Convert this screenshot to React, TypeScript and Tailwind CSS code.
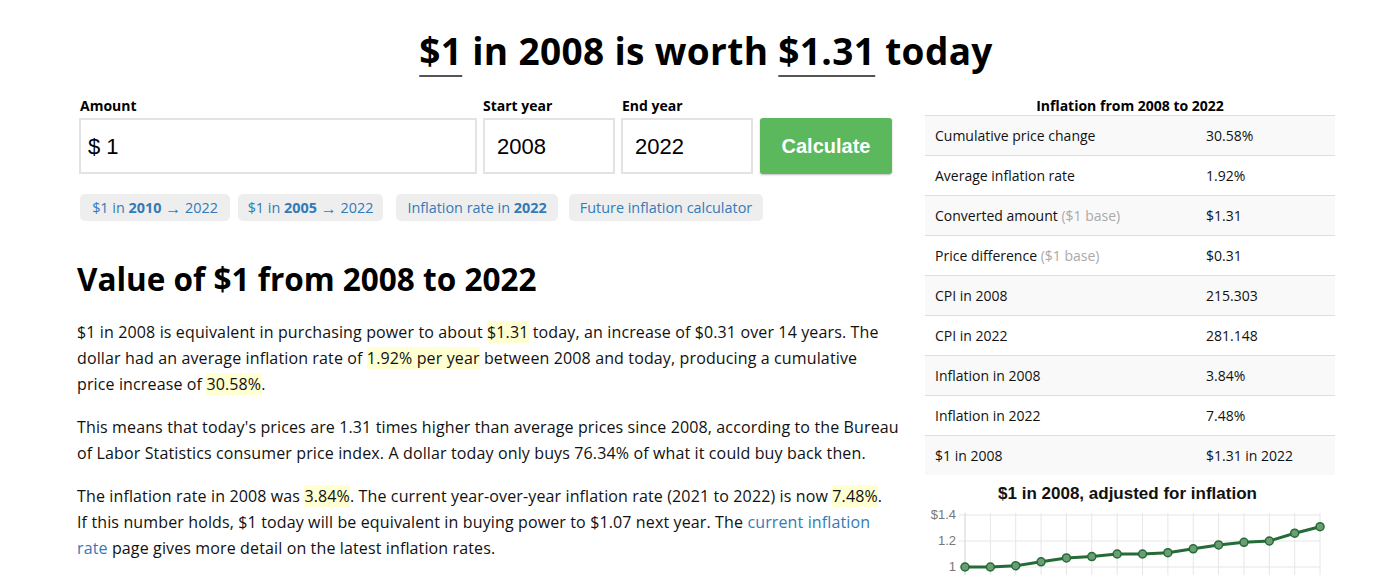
import React from "react";

const body = { fontFamily: '"Open Sans", "Noto Sans", sans-serif' };

const rows: [React.ReactNode, string][] = [
  ["Cumulative price change", "30.58%"],
  ["Average inflation rate", "1.92%"],
  [<>Converted amount <span className="text-[#aaa]">($1 base)</span></>, "$1.31"],
  [<>Price difference <span className="text-[#aaa]">($1 base)</span></>, "$0.31"],
  ["CPI in 2008", "215.303"],
  ["CPI in 2022", "281.148"],
  ["Inflation in 2008", "3.84%"],
  ["Inflation in 2022", "7.48%"],
  ["$1 in 2008", "$1.31 in 2022"],
];

const values = [1.0, 1.0, 1.01, 1.04, 1.07, 1.08, 1.1, 1.1, 1.11, 1.14, 1.17, 1.19, 1.2, 1.26, 1.31];

function Chart() {
  const x0 = 45;
  const step = 25.36;
  const y = (v: number) => 62 - (v - 1) * 130;
  const pts = values.map((v, i) => [x0 + i * step, y(v)]);
  return (
    <svg width="415" height="72" className="block">
      {values.map((_, i) => (
        <line key={i} x1={x0 + i * step} x2={x0 + i * step} y1={8} y2={72} stroke="#e6e6e6" strokeWidth="1" />
      ))}
      {[10, 36, 62].map((yy) => (
        <line key={yy} x1={x0 - 6} x2={x0 + 14 * step} y1={yy} y2={yy} stroke="#e6e6e6" strokeWidth="1" />
      ))}
      <line x1={x0} x2={x0} y1={8} y2={72} stroke="#ddd" strokeWidth="1" />
      <g fontFamily='"Liberation Sans", Arial, sans-serif' fontSize="13" fill="#777" textAnchor="end">
        <text x={36} y={14}>$1.4</text>
        <text x={36} y={40}>1.2</text>
        <text x={36} y={66}>1</text>
      </g>
      <polyline
        points={pts.map((p) => p.join(",")).join(" ")}
        fill="none"
        stroke="#256b37"
        strokeWidth="3"
        strokeLinejoin="round"
      />
      {pts.map((p, i) => (
        <circle key={i} cx={p[0]} cy={p[1]} r="4" fill="#6a9d74" stroke="#256b37" strokeWidth="1.5" />
      ))}
    </svg>
  );
}

function Hl({ children }: { children: React.ReactNode }) {
  return <span className="bg-[#ffffd2]">{children}</span>;
}

export default function App() {
  return (
    <div className="w-[1400px] h-[575px] overflow-hidden bg-white text-[#111]" style={body}>
      <h1 className="text-center text-[37px] tracking-[0.35px] font-bold leading-[44px] pt-[29px] pl-[12px] text-black">
        <span className="underline decoration-2 decoration-[#555] underline-offset-[10px]">$1</span> in 2008 is worth{" "}
        <span className="underline decoration-2 decoration-[#555] underline-offset-[10px]">$1.31</span> today
      </h1>
      <div className="flex pl-[77px] pt-[24px]">
        <div className="w-[820px]">
          <div className="flex items-end pl-[2px]">
            <div className="w-[398px]">
              <div className="text-[14px] font-bold leading-[18px] pl-[1px] text-black">Amount</div>
              <div className="mt-[3px] h-[56px] border-2 border-[#e3e3e3] flex items-center pl-[7px] text-[22px] text-black" style={{ fontFamily: '"Liberation Sans", Arial, sans-serif' }}>
                $ 1
              </div>
            </div>
            <div className="w-[132px] ml-[6px]">
              <div className="text-[14px] font-bold leading-[18px] text-black">Start year</div>
              <div className="mt-[3px] h-[56px] border-2 border-[#e3e3e3] flex items-center pl-[12px] text-[22px] text-black" style={{ fontFamily: '"Liberation Sans", Arial, sans-serif' }}>
                2008
              </div>
            </div>
            <div className="w-[132px] ml-[6px]">
              <div className="text-[14px] font-bold leading-[18px] pl-[1px] text-black">End year</div>
              <div className="mt-[3px] h-[56px] border-2 border-[#e3e3e3] flex items-center pl-[12px] text-[22px] text-black" style={{ fontFamily: '"Liberation Sans", Arial, sans-serif' }}>
                2022
              </div>
            </div>
            <div
              className="w-[132px] ml-[7px] h-[56px] bg-[#5cb85c] rounded-[3px] shadow-[0_1px_2px_rgba(0,0,0,0.25)] flex items-center justify-center text-white text-[20px] font-bold"
              style={{ fontFamily: '"Liberation Sans", Arial, sans-serif' }}
            >
              Calculate
            </div>
          </div>
          <div className="flex mt-[20px] pl-[3px] text-[14.4px] text-[#337ab7]">
            <div className="w-[150px] h-[27px] rounded-[5px] bg-[#eeeeee] flex items-center justify-center">
              $1 in&nbsp;<b>2010</b>&nbsp;<span className="text-[16px]">→</span>&nbsp;2022
            </div>
            <div className="w-[145px] ml-[8px] h-[27px] rounded-[5px] bg-[#eeeeee] flex items-center justify-center">
              $1 in&nbsp;<b>2005</b>&nbsp;<span className="text-[16px]">→</span>&nbsp;2022
            </div>
            <div className="w-[162px] ml-[13px] h-[27px] rounded-[5px] bg-[#eeeeee] flex items-center justify-center">
              Inflation rate in&nbsp;<b>2022</b>
            </div>
            <div className="w-[194px] ml-[11px] h-[27px] rounded-[5px] bg-[#eeeeee] flex items-center justify-center">
              Future inflation calculator
            </div>
          </div>
          <h2 className="text-[31.5px] font-bold leading-[40px] mt-[38px] text-black">Value of $1 from 2008 to 2022</h2>
          <div className="text-[16px] leading-[26px] whitespace-nowrap tracking-[0.13px]">
            <p className="mt-[20px]">
              $1 in 2008 is equivalent in purchasing power to about <Hl>$1.31</Hl> today, an increase of $0.31 over 14 years. The
              <br />
              dollar had an average inflation rate of <Hl>1.92% per year</Hl> between 2008 and today, producing a cumulative
              <br />
              price increase of <Hl>30.58%</Hl>.
            </p>
            <p className="mt-[17px]">
              This means that today's prices are 1.31 times higher than average prices since 2008, according to the Bureau
              <br />
              of Labor Statistics consumer price index. A dollar today only buys 76.34% of what it could buy back then.
            </p>
            <p className="mt-[17px]">
              The inflation rate in 2008 was <Hl>3.84%</Hl>. The current year-over-year inflation rate (2021 to 2022) is now <Hl>7.48%</Hl>.
              <br />
              If this number holds, $1 today will be equivalent in buying power to $1.07 next year. The{" "}
              <span className="text-[#337ab7]">current inflation</span>
              <br />
              <span className="text-[#337ab7]">rate</span> page gives more detail on the latest inflation rates.
            </p>
          </div>
        </div>
        <div className="w-[410px] ml-[28px]">
          <div className="text-center text-[14px] font-bold leading-[18px] text-black">Inflation from 2008 to 2022</div>
          <div className="text-[14px] text-[#111]">
            {rows.map(([k, v], i) => (
              <div key={i} className={`flex h-[40px] items-center border-t border-[#ddd] ${i % 2 === 0 ? "bg-[#f9f9f9]" : "bg-white"}`}>
                <div className="w-[281px] pl-[10px]">{k}</div>
                <div>{v}</div>
              </div>
            ))}
          </div>
          <div
            className="text-center text-[17px] font-bold leading-[22px] mt-[8px] text-[#111] -ml-[5px]"
            style={{ fontFamily: '"Liberation Sans", Arial, sans-serif' }}
          >
            $1 in 2008, adjusted for inflation
          </div>
          <div className="-ml-[5px]">
            <Chart />
          </div>
        </div>
      </div>
    </div>
  );
}
